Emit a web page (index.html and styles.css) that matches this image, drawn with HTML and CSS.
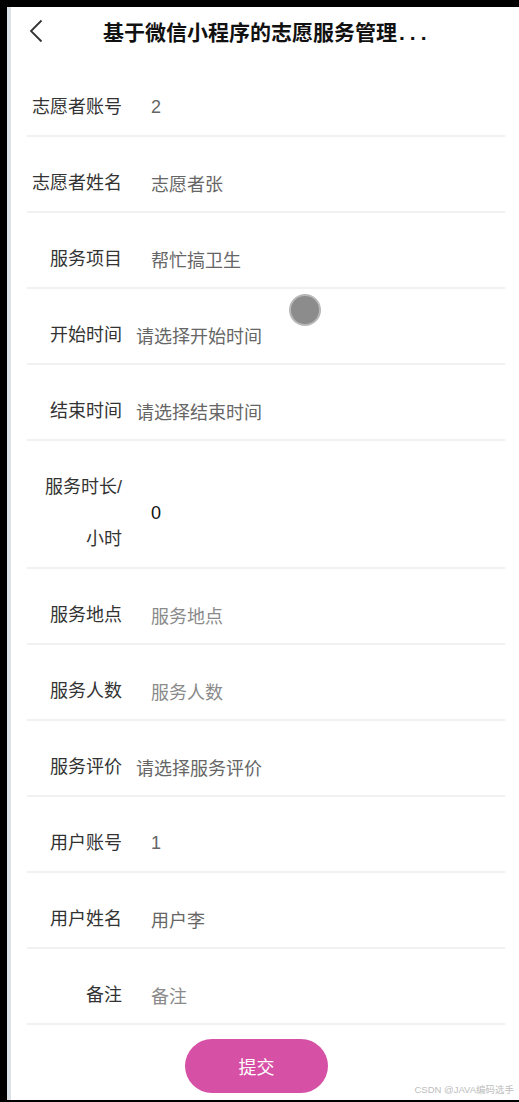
FILE: index.html
```html
<!DOCTYPE html>
<html>
<head>
  <title>志愿服务</title>
  <meta charset="UTF-8">
  <link rel="stylesheet" href="styles.css">
</head>
<body>
  <div class="screen">
    <div class="header">
      <svg class="back" width="14" height="24" viewBox="0 0 14 24">
        <polyline points="12.5,1.5 2,12 12.5,22.5" fill="none" stroke="#333" stroke-width="1.8"/>
      </svg>
      <div class="title">基于微信小程序的志愿服务管理<span class="more">...</span></div>
    </div>

    <div class="form">
      <div class="row">
        <div class="label">志愿者账号</div>
        <div class="input filled">2</div>
      </div>
      <div class="row">
        <div class="label">志愿者姓名</div>
        <div class="input filled">志愿者张</div>
      </div>
      <div class="row">
        <div class="label">服务项目</div>
        <div class="input filled">帮忙搞卫生</div>
      </div>
      <div class="row">
        <div class="label">开始时间</div>
        <div class="picker">请选择开始时间</div>
      </div>
      <div class="row">
        <div class="label">结束时间</div>
        <div class="picker">请选择结束时间</div>
      </div>
      <div class="row">
        <div class="label">服务时长/<br>小时</div>
        <div class="input dark">0</div>
      </div>
      <div class="row">
        <div class="label">服务地点</div>
        <div class="input placeholder">服务地点</div>
      </div>
      <div class="row">
        <div class="label">服务人数</div>
        <div class="input placeholder">服务人数</div>
      </div>
      <div class="row">
        <div class="label">服务评价</div>
        <div class="picker">请选择服务评价</div>
      </div>
      <div class="row">
        <div class="label">用户账号</div>
        <div class="input filled">1</div>
      </div>
      <div class="row">
        <div class="label">用户姓名</div>
        <div class="input filled">用户李</div>
      </div>
      <div class="row">
        <div class="label">备注</div>
        <div class="input placeholder">备注</div>
      </div>
    </div>

    <div class="actions">
      <button class="submit">提交</button>
    </div>

    <div class="touch"></div>
    <div class="watermark">CSDN @JAVA编码选手</div>
  </div>
</body>
</html>
```

FILE: styles.css
```css
html, body {
  margin: 0;
  padding: 0;
  background-color: #000;
  height: 1102px;
  overflow: hidden;
}

.screen {
  position: relative;
  margin-top: 7px;
  margin-left: 7px;
  height: 1093px;
  border-left: 4px solid #dde1e8;
  background-color: #fff;
  font-family: "Liberation Sans", "Noto Sans CJK SC", sans-serif;
  color: #333;
}

.header {
  display: flex;
  align-items: center;
  height: 48px;
}

.back {
  margin-left: 18px;
}

.title {
  margin-left: 60px;
  font-size: 21px;
  font-weight: bold;
  color: #111;
  white-space: nowrap;
}

.more {
  letter-spacing: 5px;
  margin-left: 2px;
}

.form {
  padding: 6px 14px 0 16px;
}

.row {
  display: flex;
  align-items: center;
  padding-top: 20px;
  padding-bottom: 2px;
  border-bottom: 2px solid #f1f1f1;
}

.label {
  width: 95px;
  flex-shrink: 0;
  text-align: right;
  font-size: 18px;
  line-height: 52px;
  color: #333;
}

.input {
  padding-left: 29px;
  font-size: 18px;
}

.picker {
  padding-left: 14px;
  font-size: 18px;
  color: #666;
}

.filled {
  color: #666;
}

.placeholder {
  color: #8a8a8a;
}

.dark {
  color: #111;
}

.actions {
  padding-top: 14px;
  padding-left: 174px;
}

.submit {
  width: 143px;
  height: 54px;
  border: none;
  border-radius: 27px;
  background-color: #d650a5;
  color: #fff;
  font-family: "Liberation Sans", "Noto Sans CJK SC", sans-serif;
  font-size: 18px;
}

.touch {
  position: absolute;
  left: 280px;
  top: 289px;
  width: 28px;
  height: 28px;
  border-radius: 50%;
  background-color: #8c8c8c;
  box-shadow: 0 0 0 2px #b8b8b8;
}

.watermark {
  position: absolute;
  right: 5px;
  bottom: 4px;
  font-size: 9.5px;
  color: #bdbdbd;
}
```
